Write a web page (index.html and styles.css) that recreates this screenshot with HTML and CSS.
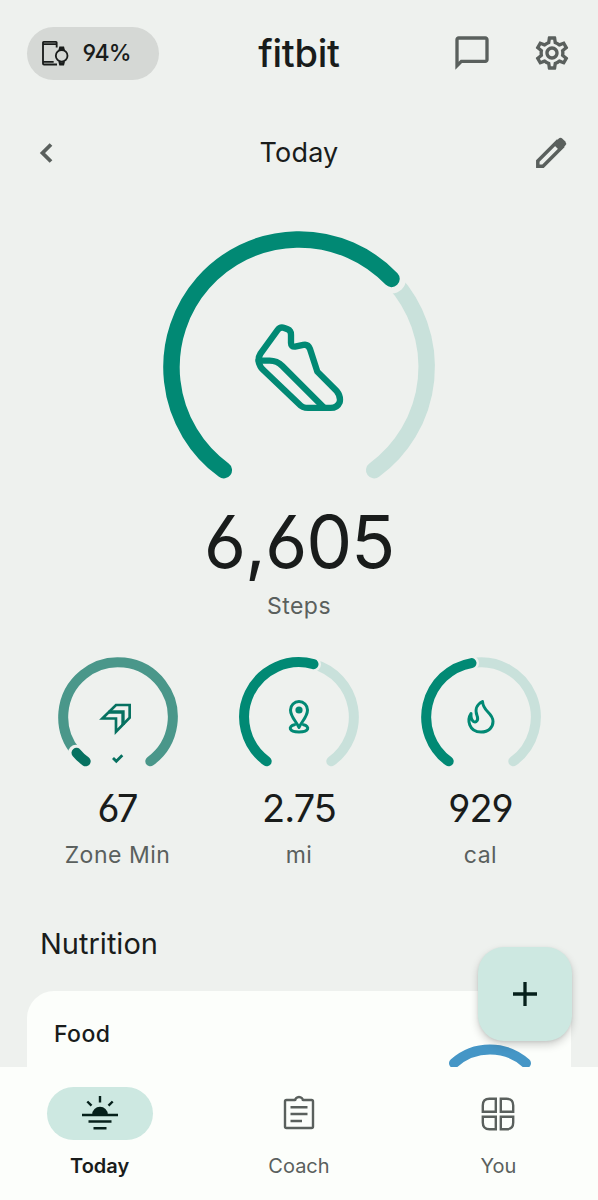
FILE: index.html
```html
<!DOCTYPE html>
<html lang="en">

<head>
    <meta charset="UTF-8">
    <meta name="viewport" content="width=device-width, initial-scale=1.0">
    <title>fitbit</title>
    <link rel="stylesheet" href="styles.css">
</head>

<body>
    <main class="content">
        <header class="topbar">
            <div class="device">
                <svg class="device-icon" viewBox="0 0 84 80">
                    <path d="M47 22V7Q47 5 45 5H8Q6 5 6 7V70Q6 73 9 73H48M6 12H47M6 65H38" />
                    <circle cx="62" cy="47" r="17.5" />
                    <path class="solid" d="M55 19h14l3 12q-10-4-20 0zM55 76h14l3-12q-10 4-20 0z" />
                </svg>
                <span>94%</span>
            </div>
            <h1 class="logo">fitbit</h1>
            <div class="actions">
                <svg class="icon" viewBox="0 0 24 24">
                    <path d="M20 2H4c-1.1 0-2 .9-2 2v18l4-4h14c1.1 0 2-.9 2-2V4c0-1.1-.9-2-2-2zm0 14H5.2L4 17.2V4h16v12z" />
                </svg>
                <svg class="icon" viewBox="0 0 24 24">
                    <path d="M19.43 12.98c.04-.32.07-.64.07-.98s-.03-.66-.07-.98l2.11-1.65c.19-.15.24-.42.12-.64l-2-3.46c-.09-.16-.26-.25-.44-.25-.06 0-.12.01-.17.03l-2.49 1c-.52-.4-1.08-.73-1.69-.98l-.38-2.65C14.46 2.18 14.25 2 14 2h-4c-.25 0-.46.18-.49.42l-.38 2.65c-.61.25-1.17.59-1.69.98l-2.49-1c-.06-.02-.12-.03-.18-.03-.17 0-.34.09-.43.25l-2 3.46c-.13.22-.07.49.12.64l2.11 1.65c-.04.32-.07.65-.07.98s.03.66.07.98l-2.11 1.65c-.19.15-.24.42-.12.64l2 3.46c.09.16.26.25.44.25.06 0 .12-.01.17-.03l2.49-1c.52.4 1.08.73 1.69.98l.38 2.65c.03.24.24.42.49.42h4c.25 0 .46-.18.49-.42l.38-2.65c.61-.25 1.17-.59 1.69-.98l2.49 1c.06.02.12.03.18.03.17 0 .34-.09.43-.25l2-3.46c.12-.22.07-.49-.12-.64l-2.11-1.65zm-1.98-1.71c.04.31.05.52.05.73 0 .21-.02.43-.05.73l-.14 1.13.89.7 1.08.84-.7 1.21-1.27-.51-1.04-.42-.9.68c-.43.32-.84.56-1.25.73l-1.06.43-.16 1.13-.2 1.35h-1.4l-.19-1.35-.16-1.13-1.06-.43c-.43-.18-.83-.41-1.23-.71l-.91-.7-1.06.43-1.27.51-.7-1.21 1.08-.84.89-.7-.14-1.13c-.03-.31-.05-.54-.05-.74s.02-.43.05-.73l.14-1.13-.89-.7-1.08-.84.7-1.21 1.27.51 1.04.42.9-.68c.43-.32.84-.56 1.25-.73l1.06-.43.16-1.13.2-1.35h1.39l.19 1.35.16 1.13 1.06.43c.43.18.83.41 1.23.71l.91.7 1.06-.43 1.27-.51.7 1.21-1.07.85-.89.7.14 1.13zM12 8c-2.21 0-4 1.79-4 4s1.79 4 4 4 4-1.79 4-4-1.79-4-4-4zm0 6c-1.1 0-2-.9-2-2s.9-2 2-2 2 .9 2 2-.9 2-2 2z" />
                </svg>
            </div>
        </header>

        <div class="datebar">
            <svg class="chevron" viewBox="0 0 14 22">
                <path d="M12 2.500L3.500 11l8.500 8.500" />
            </svg>
            <h2>Today</h2>
            <svg class="pencil" viewBox="0 0 32 32">
                <path class="pencil-body" d="M2.800 29.200V24L22 4.800L27.200 10L8 29.200z" />
                <path class="pencil-head" d="M18 7L23.500 1.700Q25.500 0 27.500 1.700L30.300 4.500Q32 6.500 30.300 8.500L25 14z" />
            </svg>
        </div>

        <section class="steps">
            <svg class="ring" viewBox="0 0 272 250">
                <path class="track" d="M230 49.600A127.700 127.700 0 0 1 211.200 239.200" />
                <circle class="gap" cx="228.500" cy="47.900" r="14.500" />
                <path class="progress" d="M60.800 239.200A127.700 127.700 0 1 1 228.500 47.900" />
                <g class="sneaker" transform="translate(77 79.300) scale(.3333)">
                    <path d="M112 60L62 129Q50 148 61 168Q64 174 70 179L177 281Q187 293 204 293H272Q292 293 299 276Q303 258 290 242L232 184L210 116Q204 101 190 104L165 109Q153 110 153 98V73Q153 61 143 57L133 53Q121 48 112 60z" />
                    <path d="M56 151H89Q111 151 127 167L250 290" />
                </g>
            </svg>
            <p class="steps-value">6,605</p>
            <p class="label">Steps</p>
        </section>

        <section class="metrics">
            <div class="metric">
                <svg class="ring small" viewBox="0 0 120 112">
                    <path class="over" d="M18.500 95.800A54.800 54.800 0 1 1 92.300 104.300" />
                    <circle class="gap" cx="18" cy="95.500" r="7.800" />
                    <path class="zone" d="M27.700 104.300Q22.300 100.500 18.500 95.800" />
                    <g class="zone-icon" transform="translate(-18 -12) scale(.3333)">
                        <path d="M187 220.500L228 180H269V218L228 260V220.500z" />
                        <path class="thick" d="M206 201H249V240" />
                    </g>
                    <path class="check" d="M55 101l3.300 3.300 6-6" />
                </svg>
                <p class="value">67</p>
                <p class="label">Zone Min</p>
            </div>
            <div class="metric">
                <svg class="ring small" viewBox="0 0 120 112">
                    <path class="track" d="M74.500 7.150A54.800 54.800 0 0 1 92.300 104.300" />
                    <circle class="gap" cx="74.500" cy="7.150" r="7.500" />
                    <path class="progress" d="M27.700 104.300A54.800 54.800 0 0 1 74.500 7.150" />
                    <g class="glyph">
                        <path d="M60 70.500C57.500 64.500 51.500 60 51.500 53a8.500 8.500 0 0 1 17 0C68.500 60 62.500 64.500 60 70.500z" />
                        <circle class="dot" cx="60" cy="53" r="3.600" />
                        <path d="M55.500 67.800C49 69 49.500 75 60 75S71 69 64.500 67.800" />
                    </g>
                </svg>
                <p class="value">2.75</p>
                <p class="label">mi</p>
            </div>
            <div class="metric">
                <svg class="ring small" viewBox="0 0 120 112">
                    <path class="track" d="M51 5.950A54.800 54.800 0 0 1 92.300 104.300" />
                    <circle class="gap" cx="50.500" cy="6.050" r="7.500" />
                    <path class="progress" d="M27.700 104.300A54.800 54.800 0 0 1 50.500 6.050" />
                    <path class="flame" d="M61.500 44.500C55.500 47.500 53.800 53 56 58.500C58 63.500 55 66 52.500 64.500C49.500 62.500 49.800 59.500 50 56.500C46 62.500 47.500 75 60 75C68 75 72 70 72 64.500C72 55.500 62 55 61.500 44.500z" />
                </svg>
                <p class="value">929</p>
                <p class="label">cal</p>
            </div>
        </section>

        <section class="nutrition">
            <h2>Nutrition</h2>
            <div class="card">
                <h3>Food</h3>
                <svg class="food-ring" viewBox="0 0 84 60">
                    <path d="M6 19.200A54 54 0 0 1 78 19.200" />
                </svg>
            </div>
        </section>
    </main>

    <button class="fab" aria-label="Add">
        <svg viewBox="0 0 24 24">
            <path d="M12 0V24M0 12H24" />
        </svg>
    </button>

    <nav class="tabs">
        <a class="tab active">
            <span class="tab-icon">
                <svg viewBox="0 0 36 36">
                    <path d="M0 19H36M6.500 25.500H29.500M11.500 32.300H24.500M18 0V6.500M5.300 5.500L9.500 9.700M30.700 5.500L26.500 9.700" />
                    <path class="sun" d="M10.200 18.500a7.800 7.800 0 0 1 15.600 0z" />
                </svg>
            </span>
            <span class="tab-label">Today</span>
        </a>
        <a class="tab">
            <span class="tab-icon">
                <svg viewBox="0 0 36 36">
                    <path d="M14.300 4H5.500Q4 4 4 5.500V30.500Q4 32 5.500 32H30.500Q32 32 32 30.500V5.500Q32 4 30.500 4H21.700M9.500 11.200H26.500M9.500 18H26.500M9.500 25H21" />
                    <path d="M14 5a4 4 0 0 1 8 0" />
                </svg>
            </span>
            <span class="tab-label">Coach</span>
        </a>
        <a class="tab">
            <span class="tab-icon">
                <svg viewBox="0 0 36 36">
                    <path d="M15.800 2.800V15.800H2.800V9.500Q2.800 2.800 9.500 2.800zM20.800 2.800V15.800H33.200V9.500Q33.200 2.800 26.500 2.800zM15.800 33.200V20.800H2.800V26.500Q2.800 33.200 9.500 33.200zM20.800 33.200V20.800H33.200V26.500Q33.200 33.200 26.500 33.200z" />
                </svg>
            </span>
            <span class="tab-label">You</span>
        </a>
    </nav>
</body>

</html>
```
FILE: styles.css
```css
* {
    box-sizing: border-box;
    margin: 0;
    padding: 0;
}

body {
    position: relative;
    display: flex;
    flex-direction: column;
    height: 1200px;
    overflow: hidden;
    background: #eef1ee;
    color: #191c1b;
    font-family: Inter, "Liberation Sans", sans-serif;
    font-feature-settings: "cv03", "cv04";
}

svg {
    display: block;
    overflow: visible;
    fill: none;
}

h1,
h2,
h3 {
    font-weight: 400;
}

.content {
    flex: 1;
    min-height: 0;
    overflow: hidden;
}

.topbar {
    display: grid;
    grid-template-columns: 1fr auto 1fr;
    align-items: center;
    height: 106px;
    padding: 0 26.5px;
}

.device {
    display: flex;
    align-items: center;
    gap: 14px;
    width: 132px;
    height: 53px;
    padding-left: 14px;
    border-radius: 27px;
    background: #d5d8d5;
    font-size: 23px;
    font-weight: 500;
    letter-spacing: -0.7px;
}

.device-icon {
    width: 28px;
    height: 27px;
    stroke: #191c1b;
    stroke-width: 5.5;
}

.device-icon .solid {
    fill: #191c1b;
    stroke: none;
}

.logo {
    font-size: 38px;
    font-weight: 500;
    letter-spacing: -0.3px;
}

.actions {
    display: flex;
    justify-content: flex-end;
    gap: 40px;
}

.icon {
    width: 40px;
    height: 40px;
    fill: #5a605d;
}

.datebar {
    display: grid;
    grid-template-columns: 1fr auto 1fr;
    align-items: center;
    height: 94px;
    padding: 0 31px;
}

.datebar h2 {
    line-height: 34px;
    padding-bottom: 1px;
    font-size: 27px;
    letter-spacing: 0.2px;
}

.chevron {
    width: 14px;
    height: 22px;
    margin-left: 8px;
    stroke: #5a605d;
    stroke-width: 3.8;
}

.pencil {
    justify-self: end;
    width: 32px;
    height: 32px;
}

.pencil-body {
    stroke: #5a605d;
    stroke-width: 3.5;
}

.pencil-head {
    fill: #5a605d;
}

.steps {
    display: flex;
    flex-direction: column;
    align-items: center;
    padding-top: 31px;
}

.ring {
    width: 272px;
    height: 250px;
    stroke-linecap: round;
    stroke-width: 16.5;
}

.track {
    stroke: #c9e1db;
}

.progress {
    stroke: #018974;
}

.gap {
    fill: #eef1ee;
}

.sneaker {
    stroke: #018974;
    stroke-width: 19;
    stroke-linejoin: round;
}

.steps-value {
    height: 108px;
    line-height: 122px;
    font-size: 73px;
    letter-spacing: -1.2px;
}

.label {
    height: 34px;
    line-height: 34px;
    color: #5a605d;
    font-size: 23px;
    letter-spacing: 0.5px;
}

.metrics {
    display: flex;
    justify-content: center;
    gap: 61.5px;
    padding-top: 34px;
}

.metric {
    display: flex;
    flex-direction: column;
    align-items: center;
    width: 120px;
}

.small {
    width: 120px;
    height: 112px;
    stroke-width: 10;
}

.over {
    stroke: #4a978a;
}

.zone {
    stroke: #067160;
}

.zone-icon {
    stroke: #067160;
    stroke-width: 8;
    stroke-linecap: butt;
}

.zone-icon .thick {
    stroke-width: 10;
}

.check {
    stroke: #067160;
    stroke-width: 2.8;
    stroke-linecap: butt;
}

.glyph,
.flame {
    stroke: #018974;
    stroke-width: 3;
    stroke-linejoin: round;
}

.dot {
    fill: #018974;
    stroke: none;
}

.value {
    height: 69px;
    line-height: 78px;
    font-size: 38px;
    letter-spacing: -1px;
}

.nutrition {
    padding: 55px 27px 0;
}

.nutrition h2 {
    height: 64px;
    padding-left: 13px;
    line-height: 34px;
    font-size: 29px;
}

.card {
    display: flex;
    justify-content: space-between;
    height: 180px;
    padding: 26px 39px 0 27px;
    border-radius: 27px 27px 0 0;
    background: #fcfefb;
}

.card h3 {
    line-height: 34px;
    font-size: 23px;
    font-weight: 500;
    letter-spacing: 0.4px;
}

.food-ring {
    width: 84px;
    height: 60px;
    margin-top: 26.5px;
    stroke: #4596c6;
    stroke-width: 10;
    stroke-linecap: round;
}

.fab {
    position: absolute;
    top: 947px;
    right: 26px;
    display: grid;
    place-items: center;
    width: 94px;
    height: 94px;
    border: 0;
    border-radius: 26px;
    background: #cde8e1;
    box-shadow: 0 4px 8px rgba(0, 0, 0, 0.18), 0 1px 3px rgba(0, 0, 0, 0.08);
}

.fab svg {
    width: 24px;
    height: 24px;
    stroke: #06201b;
    stroke-width: 3.3;
}

.tabs {
    position: relative;
    display: grid;
    grid-template-columns: repeat(3, 1fr);
    height: 133px;
    padding-top: 20px;
    background: #fcfefb;
}

.tab {
    display: flex;
    flex-direction: column;
    align-items: center;
    gap: 12px;
    color: #5a605d;
    font-size: 20px;
}

.tab-icon {
    display: grid;
    place-items: center;
    width: 106px;
    height: 53px;
    border-radius: 27px;
}

.tab-icon svg {
    width: 36px;
    height: 36px;
    stroke: #5a605d;
    stroke-width: 2.4;
}

.tab-label {
    line-height: 28px;
}

.active {
    color: #191c1b;
    font-weight: 600;
}

.active .tab-icon {
    background: #cde8e1;
}

.active .tab-icon svg {
    stroke: #06201b;
}

.active .tab-icon .sun {
    fill: #06201b;
    stroke: none;
}
```
